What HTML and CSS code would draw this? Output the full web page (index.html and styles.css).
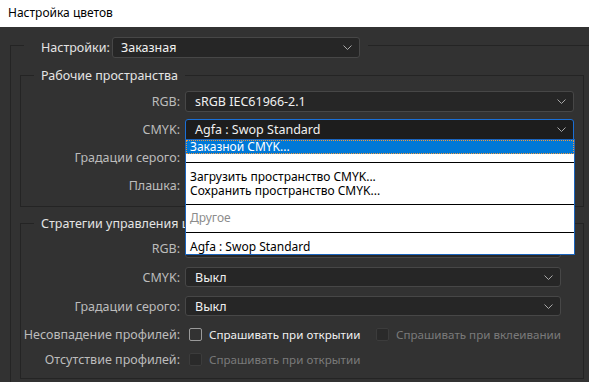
FILE: index.html
```html
<!DOCTYPE html>
<html lang="ru">
<head>
    <meta charset="UTF-8">
    <meta name="viewport" content="width=device-width, initial-scale=1.0">
    <title>Настройка цветов</title>
    <link rel="stylesheet" href="styles.css">
</head>
<body>
    <div class="titlebar">Настройка цветов</div>

    <div class="dialog">
        <div class="outer">
            <div class="outer-head">
                <span class="head-label">Настройки:</span>
                <div class="select select-main">
                    <span>Заказная</span>
                    <svg class="chevron" viewBox="0 0 9 5"><polyline points="0.5,0.5 4.5,4.5 8.5,0.5"></polyline></svg>
                </div>
            </div>

            <!-- Working spaces -->
            <div class="group group-spaces">
                <div class="group-title">Рабочие пространства</div>
                <div class="rows">
                    <div class="row">
                        <span class="label">RGB:</span>
                        <div class="select">
                            <span>sRGB IEC61966-2.1</span>
                            <svg class="chevron" viewBox="0 0 9 5"><polyline points="0.5,0.5 4.5,4.5 8.5,0.5"></polyline></svg>
                        </div>
                    </div>
                    <div class="row">
                        <span class="label">CMYK:</span>
                        <div class="select-wrap">
                            <div class="select is-open">
                                <span>Agfa : Swop Standard</span>
                                <svg class="chevron" viewBox="0 0 9 5"><polyline points="0.5,0.5 4.5,4.5 8.5,0.5"></polyline></svg>
                            </div>
                            <div class="menu">
                                <div class="menu-item is-active">Заказной CMYK...</div>
                                <div class="menu-sep sep-a"></div>
                                <div class="menu-item">Загрузить пространство CMYK...</div>
                                <div class="menu-item">Сохранить пространство CMYK...</div>
                                <div class="menu-sep sep-b"></div>
                                <div class="menu-item is-disabled">Другое</div>
                                <div class="menu-sep sep-c"></div>
                                <div class="menu-item">Agfa : Swop Standard</div>
                            </div>
                        </div>
                    </div>
                    <!-- these two are hidden under the open list -->
                    <div class="row">
                        <span class="label">Градации серого:</span>
                        <div class="select"></div>
                    </div>
                    <div class="row">
                        <span class="label">Плашка:</span>
                        <div class="select"></div>
                    </div>
                </div>
            </div>

            <!-- Color management policies -->
            <div class="group group-policies">
                <div class="group-title">Стратегии управления цв</div>
                <div class="rows rows-policies">
                    <div class="row row-small">
                        <span class="label">RGB:</span>
                        <div class="select"></div>
                    </div>
                    <div class="row row-small">
                        <span class="label">CMYK:</span>
                        <div class="select">
                            <span>Выкл</span>
                            <svg class="chevron" viewBox="0 0 9 5"><polyline points="0.5,0.5 4.5,4.5 8.5,0.5"></polyline></svg>
                        </div>
                    </div>
                    <div class="row row-small">
                        <span class="label">Градации серого:</span>
                        <div class="select">
                            <span>Выкл</span>
                            <svg class="chevron" viewBox="0 0 9 5"><polyline points="0.5,0.5 4.5,4.5 8.5,0.5"></polyline></svg>
                        </div>
                    </div>
                </div>
                <div class="checks">
                    <div class="row row-check">
                        <span class="label">Несовпадение профилей:</span>
                        <div class="option option-first">
                            <span class="check"></span>
                            <span>Спрашивать при открытии</span>
                        </div>
                        <div class="option is-disabled">
                            <span class="check"></span>
                            <span>Спрашивать при вклеивании</span>
                        </div>
                    </div>
                    <div class="row row-check">
                        <span class="label">Отсутствие профилей:</span>
                        <div class="option option-first is-disabled">
                            <span class="check"></span>
                            <span>Спрашивать при открытии</span>
                        </div>
                    </div>
                </div>
            </div>
        </div>
    </div>
</body>
</html>
```

FILE: styles.css
```css
* {
    margin: 0;
    padding: 0;
    box-sizing: border-box;
}

body {
    width: 589px;
    height: 382px;
    overflow: hidden;
    font-family: "Noto Sans", "Open Sans", sans-serif;
    background: #323232;
}

.titlebar {
    height: 27px;
    line-height: 26px;
    padding-left: 8px;
    background: #ffffff;
    color: #000000;
    font-size: 12px;
}

.dialog {
    height: 355px;
    padding: 18px 0 0 10px;
    background: #323232;
    overflow: hidden;
    font-size: 12.5px;
}

.outer {
    border-top: 1px solid #242424;
    border-left: 1px solid #242424;
    margin-right: -20px;
    height: 400px;
}

.outer-head {
    display: flex;
    align-items: center;
    width: fit-content;
    height: 21px;
    margin: -9px 0 0 13px;
    padding: 0 8px 0 17px;
    background: #323232;
}

.head-label {
    width: 71px;
    color: #e4e4e4;
}

/* Dropdowns */
.select {
    display: flex;
    align-items: center;
    justify-content: space-between;
    height: 21px;
    padding: 0 7px 0 9px;
    border: 1px solid #474747;
    border-radius: 3px;
    background: #262626;
    color: #f0f0f0;
    white-space: nowrap;
}

.select-main {
    width: 248px;
    padding-left: 8px;
}

.select.is-open {
    background: #1d1d1d;
    border-color: #1a6fd6;
    border-radius: 3px 3px 0 0;
}

.chevron {
    width: 9px;
    height: 5px;
    fill: none;
    stroke: #a8a8a8;
    stroke-width: 1;
}

/* Group boxes */
.group {
    width: 564px;
    margin-left: 9px;
    border: 1px solid #242424;
}

.group-spaces {
    height: 132px;
    margin-top: 17px;
    padding: 0 9px 9px 0;
}

.group-policies {
    height: 156px;
    margin-top: 16px;
    padding-right: 22px;
}

.group-title {
    width: fit-content;
    height: 16px;
    line-height: 16px;
    margin: -8px 0 7px 13px;
    padding: 0 7px;
    background: #323232;
    color: #e4e4e4;
    white-space: nowrap;
}

.group-policies .group-title {
    margin-bottom: 6px;
}

.rows {
    display: flex;
    flex-direction: column;
    gap: 7px;
}

.rows-policies {
    gap: 9px;
}

.row {
    display: flex;
    align-items: center;
    gap: 5px;
    height: 21px;
}

.row-small,
.row-small .select {
    height: 20px;
}

.label {
    flex: none;
    width: 159px;
    text-align: right;
    color: #bcbcbc;
    white-space: nowrap;
}

.row .select,
.select-wrap {
    flex: 1;
}

.select-wrap {
    position: relative;
}

/* Open list of the CMYK dropdown */
.menu {
    position: absolute;
    top: calc(100% - 1px);
    left: 0;
    width: calc(100% + 1px);
    z-index: 5;
    background: #ffffff;
    border: 1px solid #1a64bd;
    color: #000000;
    font-size: 12px;
}

.menu-item {
    height: 14px;
    line-height: 14px;
    padding-left: 4px;
    white-space: nowrap;
}

.menu-item.is-active {
    background: #0078d7;
    color: #ffffff;
    outline: 1px dotted #f09a3e;
    outline-offset: -1px;
}

.menu-item.is-disabled {
    color: #8c8c8c;
}

.menu-sep {
    height: 1px;
    background: #000000;
}

.sep-a {
    margin: 8px 0 7px;
}

.sep-b {
    margin: 6px 0 6px;
}

.sep-c {
    margin: 7px 0 7px;
}

/* Checkbox rows */
.checks {
    display: flex;
    flex-direction: column;
    gap: 9px;
    margin-top: 10px;
}

.row-check {
    height: 16px;
    gap: 0;
}

.row-check .label {
    margin-right: 9px;
}

.option {
    display: flex;
    align-items: center;
    gap: 7px;
    color: #f0f0f0;
    font-size: 11.6px;
    white-space: nowrap;
}

.option-first {
    width: 190px;
}

.check {
    width: 13px;
    height: 13px;
    border: 1px solid #9a9a9a;
    border-radius: 2px;
}

.option.is-disabled {
    color: #7a7a7a;
}

.option.is-disabled .check {
    border-color: #3c3c3c;
    background: #2a2a2a;
}
```
